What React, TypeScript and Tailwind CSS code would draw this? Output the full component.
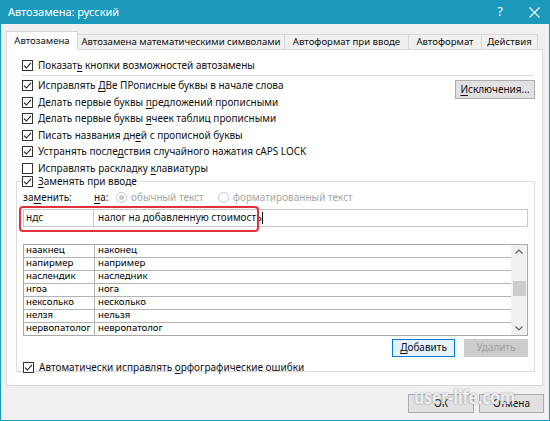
import React from 'react';

const font = { fontFamily: '"Noto Sans", "Open Sans", sans-serif' };

function Check({ on = true }: { on?: boolean }) {
  return (
    <span className="w-[11px] h-[11px] border border-[#333] bg-white flex items-center justify-center shrink-0">
      {on && (
        <svg width="9" height="9" viewBox="0 0 9 9">
          <path d="M1 4.6 L3.4 7 L8 1.8" fill="none" stroke="#222" strokeWidth="1.1" />
        </svg>
      )}
    </span>
  );
}

function U({ children }: { children: React.ReactNode }) {
  return <span className="underline underline-offset-[2px]">{children}</span>;
}

function Row({ on = true, children }: { on?: boolean; children: React.ReactNode }) {
  return (
    <div className="flex items-center gap-[5px] h-[16.5px]">
      <Check on={on} />
      <span className="whitespace-nowrap">{children}</span>
    </div>
  );
}

const pairs = [
  ['наакнец', 'наконец'],
  ['напирмер', 'например'],
  ['наслендик', 'наследник'],
  ['нгоа', 'нога'],
  ['нексолько', 'несколько'],
  ['нелзя', 'нельзя'],
  ['нервопатолог', 'невропатолог'],
];

const tabs = [
  { t: 'Автозамена математическими символами', w: 'w-[207px]' },
  { t: 'Автоформат при вводе', w: 'w-[124px]' },
  { t: 'Автоформат', w: 'w-[73px]' },
  { t: 'Действия', w: 'w-[56px]' },
];

export default function App() {
  return (
    <div className="w-[550px] h-[421px] flex flex-col bg-[#f0f0f0] text-[10px] text-[#111] overflow-hidden relative" style={font}>
      {/* title bar */}
      <div className="h-[24px] bg-[#1c9abb] text-white flex items-center pl-[8px] shrink-0">
        <span className="text-[11px] flex-1">Автозамена: русский</span>
        <span className="w-[36px] text-center text-[12px]">?</span>
        <span className="w-[32px] flex justify-center">
          <svg width="11" height="11" viewBox="0 0 11 11">
            <path d="M0.5 0.5 L10.5 10.5 M10.5 0.5 L0.5 10.5" stroke="#fff" strokeWidth="1.1" />
          </svg>
        </span>
      </div>

      <div className="flex-1 flex flex-col border-x border-b border-[#1c9abb] pl-[5px] pr-[6px]">
        {/* tabs */}
        <div className="flex items-end mt-[6px] h-[19px] text-[9.6px]">
          <div className="w-[72px] h-[19px] bg-white border border-b-0 border-[#d9d9d9] flex items-center justify-center relative top-[1px] z-10">
            Автозамена
          </div>
          {tabs.map(({ t, w }) => (
            <div key={t} className={`${w} h-[15px] border-t border-r border-[#d9d9d9] flex items-center justify-center whitespace-nowrap`}>
              {t}
            </div>
          ))}
        </div>

        {/* panel */}
        <div className="h-[337px] bg-white border border-[#d9d9d9] px-[9px] pt-[7px]">
          <div className="pl-[6px]">
            <Row>
              Показат<U>ь</U> кнопки возможностей автозамены
            </Row>
          </div>
          <div className="h-px bg-[#dcdcdc] ml-[6px] mt-[1px] mr-[-1px]" />
          <div className="flex pl-[6px] mt-[2px]">
            <div className="flex-1">
              <Row>
                Исправлять <U>Д</U>Ве ПРописные буквы в начале слова
              </Row>
              <Row>
                Делать первые буквы <U>п</U>редложений прописными
              </Row>
              <Row>
                Делать первые буквы <U>я</U>чеек таблиц прописными
              </Row>
              <Row>
                Писать названия дн<U>е</U>й с прописной буквы
              </Row>
              <Row>
                Устранять после<U>д</U>ствия случайного нажатия cAPS LOCK
              </Row>
              <Row on={false}>
                Исправлять раскладку <U>к</U>лавиатуры
              </Row>
            </div>
            <button className="w-[80px] h-[19px] mt-[2px] mr-[-2px] bg-[#e1e1e1] border border-[#adadad] text-[10px]">
              <U>И</U>сключения...
            </button>
          </div>

          {/* group box */}
          <fieldset className="border border-[#dcdcdc] mt-[-3px] mr-[-2px] px-[6px] pb-[6px] h-[198px]">
            <legend className="px-0 -ml-[1px]">
              <div className="flex items-center gap-[5px] h-[15px] bg-white pr-[2px]">
                <Check />
                <span>
                  <U>З</U>аменять при вводе
                </span>
              </div>
            </legend>
            <div className="flex items-center h-[16px] mt-[1px]">
              <span className="w-[71px]">
                за<U>м</U>енить:
              </span>
              <span className="w-[22px]">
                <U>н</U>а:
              </span>
              <span className="flex items-center gap-[4px] text-[#a6a6a6]">
                <span className="w-[11px] h-[11px] rounded-full border border-[#c8c8c8] flex items-center justify-center">
                  <span className="w-[5px] h-[5px] rounded-full bg-[#c8c8c8]" />
                </span>
                обычный текст
              </span>
              <span className="flex items-center gap-[4px] text-[#a6a6a6] ml-[14px]">
                <span className="w-[11px] h-[11px] rounded-full border border-[#c8c8c8]" />
                форматированный текст
              </span>
            </div>

            <div className="relative flex mt-[3px] h-[18px]">
              <div className="w-[71px] border border-[#c8c8c8] flex items-center pl-[2px]">ндс</div>
              <div className="flex-1 border border-l-0 border-[#c8c8c8] flex items-center pl-[4px]">
                налог на добавленную стоимость
                <span className="w-px h-[12px] bg-black" />
              </div>
              <div className="absolute left-[-4px] top-[-3px] w-[240px] h-[26px] border-2 border-[#e0323a] rounded-[4px]" />
            </div>

            {/* list */}
            <div className="flex mt-[17px] h-[92px] border border-[#a9a9a9] text-[9.6px]">
              <div className="flex-1">
                {pairs.map(([a, b]) => (
                  <div key={a} className="flex h-[13px] border-b border-[#b4b4b4] last:border-b-0 text-black">
                    <div className="w-[71px] border-r border-[#b4b4b4] pl-[2px] leading-[12px] -mt-px whitespace-nowrap overflow-hidden">{a}</div>
                    <div className="pl-[3px] leading-[12px] -mt-px">{b}</div>
                  </div>
                ))}
              </div>
              <div className="w-[16px] bg-[#f0f0f0] flex flex-col items-center justify-between py-[4px]">
                <svg width="8" height="5" viewBox="0 0 8 5">
                  <path d="M0.5 4.5 L4 1 L7.5 4.5" fill="none" stroke="#606060" strokeWidth="1.2" />
                </svg>
                <div className="w-[13px] h-[15px] bg-[#cdcdcd] mt-[27px]" />
                <div className="flex-1" />
                <svg width="8" height="5" viewBox="0 0 8 5">
                  <path d="M0.5 0.5 L4 4 L7.5 0.5" fill="none" stroke="#606060" strokeWidth="1.2" />
                </svg>
              </div>
            </div>

            <div className="flex justify-end gap-[9px] mt-[3px]">
              <button className="w-[63px] h-[18px] bg-[#e5f1fb] border border-[#0078d7] text-[10px]">
                <U>Д</U>обавить
              </button>
              <button className="w-[64px] h-[18px] bg-[#cccccc] border border-[#cccccc] text-[#a0a0a0] text-[10px]">
                Удалить
              </button>
            </div>

            <div className="flex items-center gap-[5px] h-[16px] mt-[3px]">
              <Check />
              <span>
                Автоматически исправлять <U>о</U>рфографические ошибки
              </span>
            </div>
          </fieldset>
        </div>

        {/* bottom buttons */}
        <div className="flex justify-end gap-[5px] mt-[8px]">
          <button className="w-[66px] h-[19px] bg-[#e1e1e1] border border-[#adadad] text-[10px]">ОК</button>
          <button className="w-[65px] h-[19px] bg-[#e1e1e1] border border-[#adadad] text-[10px] mr-[-1px]">Отмена</button>
        </div>
      </div>

      {/* watermark */}
      <div
        className="absolute left-[414px] top-[386px] text-[20px] leading-[22px] font-bold whitespace-nowrap text-white/85 scale-x-[0.78] origin-left pointer-events-none"
        style={{ textShadow: '0 0 2px rgba(60,60,60,0.6)' }}
      >
        user-life.com
      </div>
    </div>
  );
}
